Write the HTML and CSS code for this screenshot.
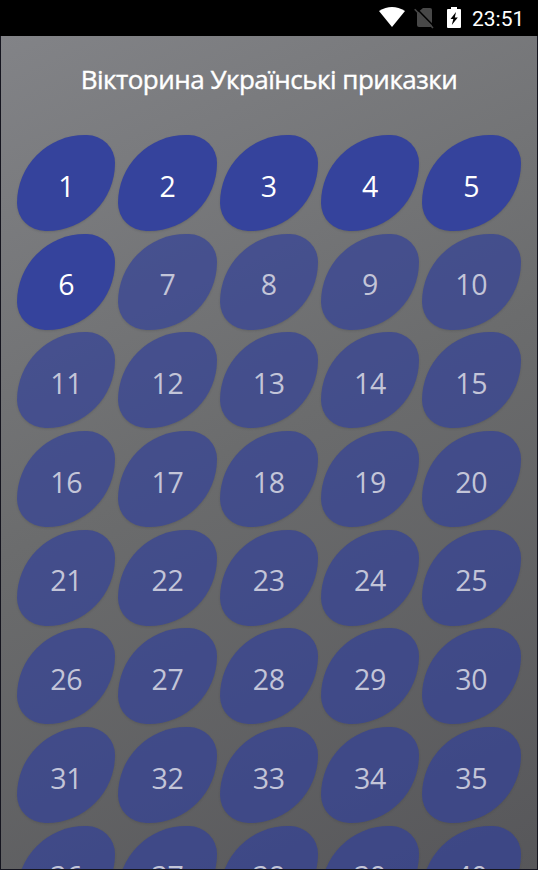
FILE: index.html
```html
<!DOCTYPE html>
<html lang="uk">

<head>
    <meta charset="UTF-8">
    <meta name="viewport" content="width=device-width, initial-scale=1.0">
    <title>Вікторина Українські приказки</title>
    <link rel="stylesheet" href="styles.css">
</head>

<body>
    <div class="status-bar">
        <svg class="wifi" width="26" height="20" viewBox="0 0 26 20">
            <path d="M0 4 Q13 -4 26 4 L13 20 Z" fill="#fff"/>
        </svg>
        <svg class="no-sim" width="20" height="22" viewBox="0 0 20 22">
            <path d="M9 1 H16 Q18 1 18 3 V18 Q18 20 16 20 H5 Q3 20 3 18 V6 Z" fill="#484848"/>
            <path d="M2 1 L20 19.3" stroke="#000" stroke-width="1.6"/>
            <path d="M0.7 2.2 L19 21" stroke="#484848" stroke-width="1.6"/>
        </svg>
        <svg class="battery" width="14" height="21" viewBox="0 0 14 21">
            <path d="M4 0 H10 V2 H13 Q14 2 14 3 V20 Q14 21 13 21 H1 Q0 21 0 20 V3 Q0 2 1 2 H4 Z" fill="#fff"/>
            <path d="M9 5 L3.5 12 H6.3 L4.8 18 L10.8 10.5 H7.8 Z" fill="#000"/>
        </svg>
        <span class="clock">23:51</span>
    </div>
    <main>
        <h1>Вікторина Українські приказки</h1>
        <div class="levels" id="levels"></div>
    </main>

    <script>
        const levels = document.getElementById('levels');
        const opened = 6;

        for (let i = 1; i <= 40; i++) {
            const button = document.createElement('button');
            button.className = 'level';
            button.disabled = i > opened;
            button.innerHTML = `<span>${i}</span>`;
            levels.appendChild(button);
        }
    </script>
</body>

</html>
```
FILE: styles.css
```css
* {
    box-sizing: border-box;
}
body {
    margin: 0;
    height: 870px;
    overflow: hidden;
    display: flex;
    flex-direction: column;
    background: #15151f;
    font-family: "Open Sans", "Noto Sans", sans-serif;
    color: #fff;
}
.status-bar {
    height: 36px;
    flex: none;
    display: flex;
    align-items: flex-start;
    padding: 7px 0 0 379px;
    background: #000;
}
.no-sim {
    margin-left: 9px;
}
.battery {
    margin-left: 13px;
}
.clock {
    margin-left: 11px;
    font: 21px/24px Roboto, sans-serif;
}
main {
    flex: 1;
    min-height: 0;
    margin: 0 1px 1px;
    padding: 0 16px;
    overflow: hidden;
    background: linear-gradient(155deg, #828387 0%, #6b6c6d 48%, #57575a 100%);
}
h1 {
    margin: 0;
    padding-top: 25px;
    height: 99px;
    font-size: 26px;
    line-height: 36px;
    font-weight: 400;
    letter-spacing: -0.5px;
    -webkit-text-stroke: 0.4px #fff;
    text-align: center;
    white-space: nowrap;
}
.levels {
    display: grid;
    grid-template-columns: repeat(5, 98.4px);
    grid-auto-rows: 96px;
    gap: 2.7px 2.9px;
}
.level {
    padding: 0;
    border: none;
    border-radius: 70px 29px;
    background: #35439c;
    color: #fff;
    font-family: inherit;
    font-size: 28.5px;
    letter-spacing: -0.3px;
    box-shadow: 0 1px 2px rgba(60, 60, 60, 0.25);
}
.level span {
    position: relative;
    top: 2.5px;
}
.level:disabled {
    background: rgba(49, 63, 153, 0.68);
    color: #c3c5d8;
}
```
